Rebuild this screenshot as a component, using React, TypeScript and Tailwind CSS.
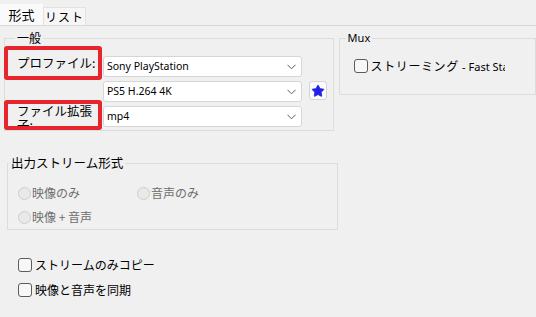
import { Star } from "lucide-react";

const jp = "font-['Noto_Sans_CJK_JP',sans-serif]";
const latin = "font-['Noto_Sans','Noto_Sans_CJK_JP',sans-serif]";

function Chevron() {
  return (
    <svg width="9" height="6" viewBox="0 0 9 6" className="shrink-0">
      <path d="M0.5 0.8 L4.5 4.8 L8.5 0.8" fill="none" stroke="#5a5a5a" strokeWidth="1" />
    </svg>
  );
}

function Combo({ value }: { value: string }) {
  return (
    <div className="flex h-[21px] w-[199px] items-center justify-between rounded-[3px] border border-[#d6d6d6] bg-white pl-[3px] pr-[5px]">
      <span className={`${latin} text-[10.5px] leading-none text-black`}>{value}</span>
      <Chevron />
    </div>
  );
}

function CheckBox({ label }: { label: string }) {
  return (
    <div className="flex h-[16px] items-center gap-[3px]">
      <span className="size-[14px] shrink-0 rounded-[3px] border border-[#5c5c5c] bg-[#f7f7f7]" />
      <span className={`${jp} whitespace-nowrap text-[12px] leading-none text-black`}>{label}</span>
    </div>
  );
}

function Radio({ label }: { label: string }) {
  return (
    <div className="flex h-[16px] items-center gap-[1px]">
      <span className="size-[13px] shrink-0 rounded-full border border-[#cccccc] bg-[#e9e9e9]" />
      <span className={`${jp} whitespace-nowrap text-[12px] leading-none text-[#6e6e6e]`}>{label}</span>
    </div>
  );
}

export default function App() {
  return (
    <div className="relative h-[317px] w-[536px] overflow-hidden bg-[#f0f0f0] text-black">
      {/* tabs */}
      <div className="flex h-[26px] items-end border-b border-[#d9d9d9]">
        <div className={`${jp} flex h-[21px] w-[43px] items-center justify-center bg-[#fafafa] text-[13px]`}>
          形式
        </div>
        <div className={`${jp} flex h-[18px] w-[43px] items-center justify-center border border-b-0 border-[#e2e2e2] bg-[#f6f6f6] text-[12px] tracking-[1px]`}>
          リスト
        </div>
      </div>

      <div className="flex flex-col">
        <div className="mt-[4px] flex items-start">
          {/* 一般 */}
          <fieldset className="ml-[4px] h-[101px] w-[334px] border border-[#dcdcdc] p-0">
            <legend className={`${jp} ml-[10px] px-[2px] text-[12px] leading-[16px]`}>一般</legend>
            <div className="flex flex-col gap-[4px] pl-[12px] pt-[10px]">
              <div className="flex items-start">
                <div className={`${jp} h-[21px] w-[82px] text-[12.5px] leading-[14px]`}>プロファイル:</div>
                <div className="ml-[4px]">
                  <Combo value="Sony PlayStation" />
                </div>
              </div>
              <div className="flex items-start">
                <div className="h-[21px] w-[82px]" />
                <div className="ml-[4px]">
                  <Combo value="PS5 H.264 4K" />
                </div>
                <button className="ml-[7px] flex h-[19px] w-[18px] items-center justify-center rounded-[3px] border border-[#d4d4d4] bg-[#fbfbfb]">
                  <Star className="size-[14px]" fill="#2020e6" stroke="#2020e6" strokeWidth={1.5} />
                </button>
              </div>
              <div className="flex items-start">
                <div className={`${jp} -mt-[2px] h-[23px] w-[80px] overflow-hidden text-[12.5px] leading-[14px]`}>
                  ファイル拡張子:
                </div>
                <div className="ml-[6px]">
                  <Combo value="mp4" />
                </div>
              </div>
            </div>
          </fieldset>

          {/* Mux */}
          <fieldset className="ml-[5px] h-[65px] w-[200px] border border-[#dcdcdc] p-0">
            <legend className={`${latin} ml-[6px] px-[2px] text-[11px] leading-[16px]`}>Mux</legend>
            <div className="w-[165px] overflow-hidden pl-[14px] pt-[12px]">
              <div className="flex h-[16px] items-center gap-[3px]">
                <span className="size-[14px] shrink-0 rounded-[3px] border border-[#5c5c5c] bg-[#f7f7f7]" />
                <span className={`${jp} whitespace-nowrap text-[12px] leading-none tracking-[0.6px]`}>
                  ストリーミング <span className={`${latin} text-[11px] tracking-normal`}>- Fast Start</span>
                </span>
              </div>
            </div>
          </fieldset>
        </div>

        {/* 出力ストリーム形式 */}
        <fieldset className="ml-[7px] mt-[24px] h-[75px] w-[331px] border border-[#dcdcdc] p-0">
          <legend className={`${jp} ml-[1px] px-[2px] text-[12.5px] leading-[16px]`}>出力ストリーム形式</legend>
          <div className="grid grid-cols-[119px_auto] gap-y-[8px] pl-[10px] pt-[14px]">
            <Radio label="映像のみ" />
            <Radio label="音声のみ" />
            <Radio label="映像 + 音声" />
          </div>
        </fieldset>

        <div className="ml-[18px] mt-[27px] flex flex-col gap-[9px]">
          <CheckBox label="ストリームのみコピー" />
          <CheckBox label="映像と音声を同期" />
        </div>
      </div>

      {/* annotation frames */}
      <div className="pointer-events-none absolute left-[4px] top-[46px] h-[34px] w-[98px] rounded-[3px] border-[4px] border-[#e6262c]" />
      <div className="pointer-events-none absolute left-[4px] top-[100px] h-[30px] w-[98px] rounded-[3px] border-[4px] border-[#e6262c]" />
    </div>
  );
}
